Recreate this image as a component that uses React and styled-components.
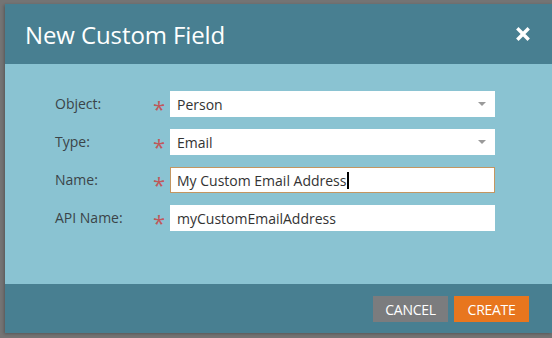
import styled, { createGlobalStyle } from "styled-components";

const GlobalStyle = createGlobalStyle`
  html, body {
    margin: 0;
    padding: 0;
    background: #747474;
    overflow: hidden;
  }
  body {
    font-family: "Open Sans", "Liberation Sans", sans-serif;
  }
`;

const Page = styled.div`
  width: 552px;
  height: 338px;
  padding: 4px 0 0 5px;
  box-sizing: border-box;
`;

const Dialog = styled.div`
  width: 547px;
  display: flex;
  flex-direction: column;
  box-shadow: -1px 1px 3px rgba(0, 0, 0, 0.25);
`;

const Header = styled.div`
  height: 60px;
  background: #487f91;
  display: flex;
  align-items: center;
  justify-content: space-between;
  padding: 0 22px 0 20px;
  box-sizing: border-box;

  h2 {
    margin: 0;
    font-size: 24px;
    font-weight: 400;
    color: #fff;
    letter-spacing: -0.1px;
  }
`;

const Close = styled.button`
  border: none;
  background: none;
  padding: 0;
  width: 14px;
  height: 14px;
  display: flex;
  cursor: pointer;
`;

const Body = styled.div`
  height: 220px;
  background: #8ac3d2;
  padding: 27px 0 0 50px;
  box-sizing: border-box;
  display: flex;
  flex-direction: column;
  gap: 12px;
`;

const Row = styled.div`
  display: flex;
  align-items: center;
  height: 26px;
`;

const Label = styled.label`
  width: 98px;
  font-size: 14px;
  color: #3b4448;
  margin-top: -1px;
`;

const Star = styled.span`
  width: 17px;
  font-size: 22px;
  line-height: 1;
  color: #c0585a;
  padding-top: 6px;
  height: 26px;
  box-sizing: border-box;
`;

const Field = styled.div`
  position: relative;
  width: 325px;
  height: 26px;
  box-sizing: border-box;
  background: #fff;
  border: 1px solid ${(p) => (p.focused ? "#c39661" : "#fff")};
  display: flex;
  align-items: center;
  padding-left: 6px;
  font-size: 14px;
  color: #333;
`;

const Caret = styled.span`
  display: inline-block;
  width: 2px;
  height: 17px;
  background: #000;
  margin-left: 1px;
`;

const Arrow = styled.span`
  position: absolute;
  right: 8px;
  top: 10px;
  width: 0;
  height: 0;
  border-left: 4px solid transparent;
  border-right: 4px solid transparent;
  border-top: 4px solid #9a9a9a;
`;

const Footer = styled.div`
  height: 49px;
  background: #487f91;
  display: flex;
  align-items: center;
  justify-content: flex-end;
  gap: 6px;
  padding: 1px 23px 0 0;
  box-sizing: border-box;
`;

const Button = styled.button`
  width: 75px;
  height: 26px;
  border: none;
  color: #fff;
  font-family: "Open Sans", "Liberation Sans", sans-serif;
  font-size: 14px;
  letter-spacing: -0.3px;
  text-transform: uppercase;
  background: ${(p) => (p.primary ? "#e8761e" : "#7b7c7e")};
  cursor: pointer;
`;

const fields = [
  { label: "Object:", value: "Person", select: true },
  { label: "Type:", value: "Email", select: true },
  { label: "Name:", value: "My Custom Email Address", focused: true },
  { label: "API Name:", value: "myCustomEmailAddress" },
];

export default function App() {
  return (
    <>
      <GlobalStyle />
      <Page>
        <Dialog>
          <Header>
            <h2>New Custom Field</h2>
            <Close aria-label="Close">
              <svg width="14" height="14" viewBox="0 0 14 14">
                <path
                  d="M2.5 2.5 L11.5 11.5 M11.5 2.5 L2.5 11.5"
                  stroke="#fff"
                  strokeWidth="3.4"
                  strokeLinecap="square"
                />
              </svg>
            </Close>
          </Header>
          <Body>
            {fields.map((f) => (
              <Row key={f.label}>
                <Label>{f.label}</Label>
                <Star>*</Star>
                <Field focused={f.focused}>
                  {f.value}
                  {f.focused && <Caret />}
                  {f.select && <Arrow />}
                </Field>
              </Row>
            ))}
          </Body>
          <Footer>
            <Button>Cancel</Button>
            <Button primary>Create</Button>
          </Footer>
        </Dialog>
      </Page>
    </>
  );
}
